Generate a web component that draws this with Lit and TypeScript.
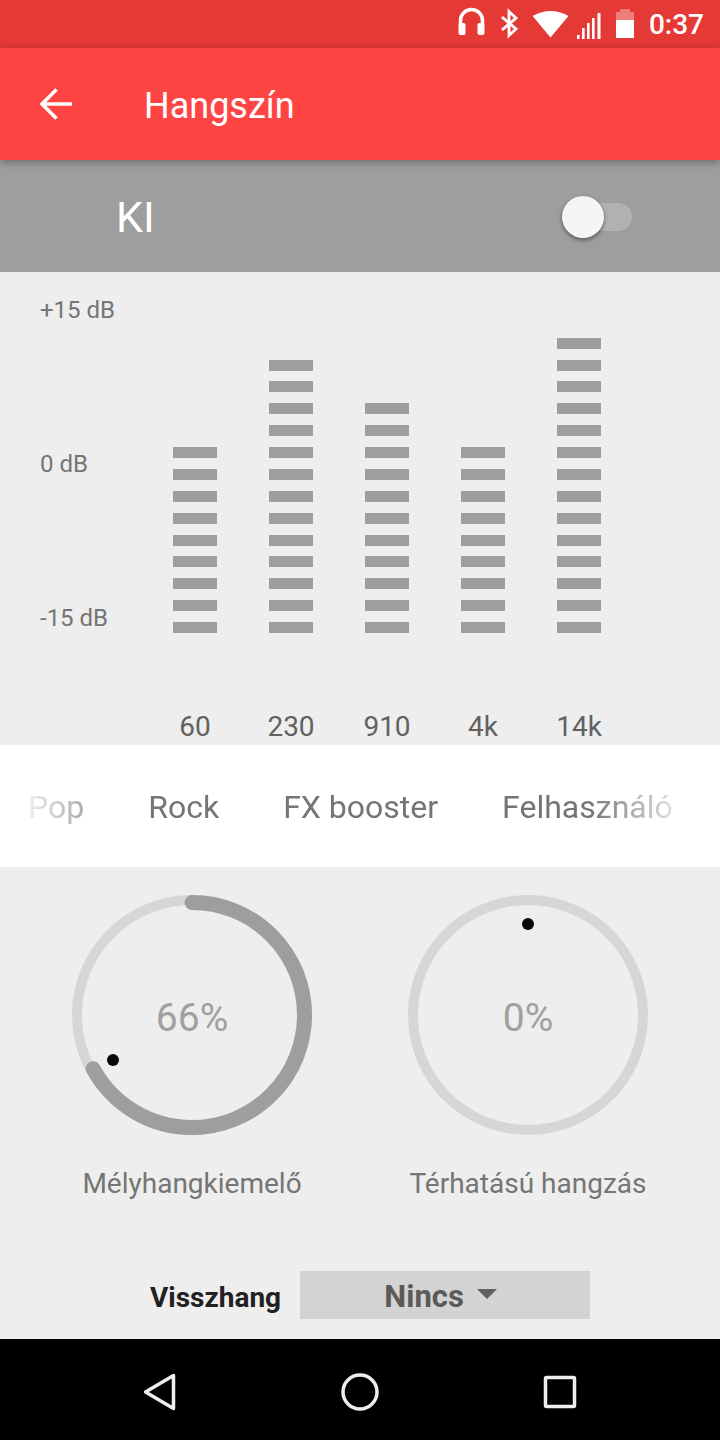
import { LitElement, html, css, svg } from 'lit';
import { customElement } from 'lit/decorators.js';

const bands = [
  { label: '60', segments: 9 },
  { label: '230', segments: 13 },
  { label: '910', segments: 11 },
  { label: '4k', segments: 9 },
  { label: '14k', segments: 14 },
];

const presets = ['Pop', 'Rock', 'FX booster', 'Felhasználó'];

const knobs = [
  { label: 'Mélyhangkiemelő', value: 66, dot: [41, 165] },
  { label: 'Térhatású hangzás', value: 0, dot: [120, 29] },
];

@customElement('app-root')
export class AppRoot extends LitElement {
  static styles = css`
    :host {
      display: block;
      width: 720px;
      height: 1440px;
      background: #eeeeee;
      font-family: Roboto, "Liberation Sans", sans-serif;
      overflow: hidden;
    }
    .status {
      height: 48px;
      background: #e53935;
      display: flex;
      justify-content: flex-end;
      align-items: center;
      gap: 15px;
      padding-right: 16px;
      color: #fff;
      font-size: 28px;
      font-weight: 500;
    }
    .status svg {
      display: block;
      height: 48px;
    }
    .appbar {
      position: relative;
      z-index: 2;
      height: 112px;
      background: #ff4444;
      display: flex;
      align-items: center;
      padding-left: 40px;
      gap: 73px;
      color: #fff;
      font-size: 36px;
      box-shadow: 0 2px 8px rgba(0, 0, 0, 0.35);
    }
    .appbar svg {
      display: block;
    }
    .appbar span {
      margin: 4px 0 0 -1px;
    }
    .switch-band {
      height: 112px;
      background: #9e9e9e;
      display: flex;
      align-items: center;
      justify-content: space-between;
      padding: 0 88px 0 116px;
      color: #fff;
      font-size: 43px;
    }
    .switch-band span {
      margin-top: 2px;
    }
    .switch {
      position: relative;
      width: 62px;
      height: 28px;
      margin-top: 1px;
      border-radius: 14px;
      background: rgba(255, 255, 255, 0.2);
    }
    .thumb {
      position: absolute;
      left: -8px;
      top: -7px;
      width: 42px;
      height: 42px;
      border-radius: 50%;
      background: #f5f5f5;
      box-shadow: 0 2px 4px rgba(0, 0, 0, 0.45);
    }
    .eq {
      box-sizing: border-box;
      height: 473px;
      padding: 24px 0 0 40px;
    }
    .eq-main {
      display: flex;
      height: 337px;
    }
    .scale {
      width: 107px;
      height: 336px;
      display: flex;
      flex-direction: column;
      justify-content: space-between;
      color: #757575;
      font-size: 24px;
      line-height: 28px;
    }
    .band {
      width: 96px;
      display: flex;
      flex-direction: column;
      align-items: center;
      justify-content: flex-end;
      gap: 10.875px;
    }
    .seg {
      width: 44px;
      height: 11px;
      background: #9e9e9e;
    }
    .freqs {
      display: flex;
      margin: 80px 0 0 107px;
      color: #616161;
      font-size: 28px;
      line-height: 28px;
    }
    .freqs span {
      width: 96px;
      text-align: center;
    }
    .presets {
      box-sizing: border-box;
      height: 122px;
      background: #fff;
      display: flex;
      align-items: center;
      gap: 64px;
      padding: 2px 0 0 28px;
      color: #757575;
      font-size: 32px;
      white-space: nowrap;
      -webkit-mask-image: linear-gradient(90deg, rgba(0,0,0,0.1) 25px, #000 130px, #000 590px, rgba(0,0,0,0.15) 680px);
      mask-image: linear-gradient(90deg, rgba(0,0,0,0.1) 25px, #000 130px, #000 590px, rgba(0,0,0,0.15) 680px);
    }
    .presets-wrap {
      background: #fff;
    }
    .effects {
      box-sizing: border-box;
      height: 472px;
      padding-top: 28px;
    }
    .knobs {
      display: grid;
      grid-template-columns: 336px 336px;
      padding: 0 24px;
    }
    .knob {
      display: flex;
      flex-direction: column;
      align-items: center;
    }
    .knob svg {
      display: block;
    }
    .knob-value {
      font-size: 39px;
      fill: #a0a0a0;
    }
    .knob-label {
      margin-top: 33px;
      color: #757575;
      font-size: 28px;
      line-height: 32px;
    }
    .echo {
      display: flex;
      align-items: center;
      gap: 19px;
      margin-top: 71px;
      padding-left: 150px;
    }
    .echo-label {
      margin-top: 4px;
      color: #212121;
      font-size: 28px;
      font-weight: 700;
    }
    .dropdown {
      box-sizing: border-box;
      width: 290px;
      height: 48px;
      padding-right: 9px;
      background: #d3d3d3;
      display: flex;
      align-items: center;
      justify-content: center;
      gap: 13px;
      color: #5a5a5a;
      font-size: 31px;
      font-weight: 700;
    }
    .dropdown span {
      margin-top: 2px;
    }
    .caret {
      width: 0;
      height: 0;
      margin-top: -2px;
      border-left: 10px solid transparent;
      border-right: 10px solid transparent;
      border-top: 10px solid #616161;
    }
    .nav {
      box-sizing: border-box;
      height: 101px;
      background: #000;
      display: flex;
      gap: 140px;
      padding: 23px 0 0 130px;
    }
    .nav svg {
      display: block;
      fill: none;
      stroke: #eeeeee;
      stroke-width: 3.5;
      stroke-linejoin: round;
    }
  `;

  renderKnob(knob: { label: string; value: number; dot: number[] }) {
    const circumference = 2 * Math.PI * 112.5;
    const sweep = (circumference * (knob.value + 1)) / 100;
    return html`
      <div class="knob">
        <svg width="240" height="240" viewBox="0 0 240 240">
          <circle cx="120" cy="120" r="115" fill="none" stroke="#d6d6d6" stroke-width="10"></circle>
          ${knob.value > 0
            ? svg`<circle cx="120" cy="120" r="112.5" fill="none" stroke="#9e9e9e" stroke-width="15"
                stroke-linecap="round" stroke-dasharray="${sweep} ${circumference}"
                transform="rotate(-90 120 120)"></circle>`
            : ''}
          <circle cx="${knob.dot[0]}" cy="${knob.dot[1]}" r="6" fill="#0a0a0a"></circle>
          <text class="knob-value" x="120" y="136" text-anchor="middle">${knob.value}%</text>
        </svg>
        <div class="knob-label">${knob.label}</div>
      </div>
    `;
  }

  render() {
    return html`
      <div class="status">
        <svg width="27" viewBox="0 0 27 48">
          <path d="M2.5 25V20.5A11 11 0 0 1 24.5 20.5V25" fill="none" stroke="#fff" stroke-width="3.5"></path>
          <rect x="0.5" y="23" width="7" height="12" rx="2" fill="#fff"></rect>
          <rect x="19.5" y="23" width="7" height="12" rx="2" fill="#fff"></rect>
        </svg>
        <svg width="18" viewBox="0 0 18 48">
          <path d="M2 17L16 29L9 35.5V11.5L16 18L2 30" fill="none" stroke="#fff" stroke-width="2.8"></path>
        </svg>
        <svg width="68" viewBox="0 0 68 48">
          <path d="M-0.5 16Q17.5 6 35.5 16L17.5 37.5Z" fill="#fff"></path>
          <rect x="44" y="35" width="2.6" height="4" fill="#fff"></rect>
          <rect x="49" y="28" width="2.6" height="11" fill="#fff"></rect>
          <rect x="54" y="23" width="2.6" height="16" fill="#fff"></rect>
          <rect x="59" y="18" width="2.6" height="21" fill="#fff"></rect>
          <rect x="64.5" y="13" width="3" height="26" fill="#fff"></rect>
        </svg>
        <svg width="18" viewBox="0 0 18 48">
          <path d="M4 12V9H14V12H18V20H0V12Z" fill="#fff" fill-opacity="0.35"></path>
          <rect x="0" y="20" width="18" height="18" fill="#fff"></rect>
        </svg>
        <span>0:37</span>
      </div>

      <div class="appbar">
        <svg width="32" height="32" viewBox="0 0 32 32">
          <path d="M32 16H3M16.5 1.5L2 16L16.5 30.5" fill="none" stroke="#fff" stroke-width="3.5"></path>
        </svg>
        <span>Hangszín</span>
      </div>

      <div class="switch-band">
        <span>KI</span>
        <div class="switch"><div class="thumb"></div></div>
      </div>

      <div class="eq">
        <div class="eq-main">
          <div class="scale">
            <span>+15 dB</span>
            <span>0 dB</span>
            <span>-15 dB</span>
          </div>
          ${bands.map(
            (band) => html`
              <div class="band">
                ${Array.from({ length: band.segments }, () => html`<div class="seg"></div>`)}
              </div>
            `
          )}
        </div>
        <div class="freqs">
          ${bands.map((band) => html`<span>${band.label}</span>`)}
        </div>
      </div>

      <div class="presets-wrap">
        <div class="presets">
          ${presets.map((preset) => html`<span>${preset}</span>`)}
        </div>
      </div>

      <div class="effects">
        <div class="knobs">
          ${knobs.map((knob) => this.renderKnob(knob))}
        </div>
        <div class="echo">
          <span class="echo-label">Visszhang</span>
          <div class="dropdown">
            <span>Nincs</span>
            <div class="caret"></div>
          </div>
        </div>
      </div>

      <div class="nav">
        <svg width="60" height="60" viewBox="0 0 60 60">
          <path d="M15.5 30L43.5 13.5V46.5Z"></path>
        </svg>
        <svg width="60" height="60" viewBox="0 0 60 60">
          <circle cx="30" cy="30" r="17"></circle>
        </svg>
        <svg width="60" height="60" viewBox="0 0 60 60">
          <rect x="15.5" y="15.5" width="29" height="29" rx="1"></rect>
        </svg>
      </div>
    `;
  }
}
